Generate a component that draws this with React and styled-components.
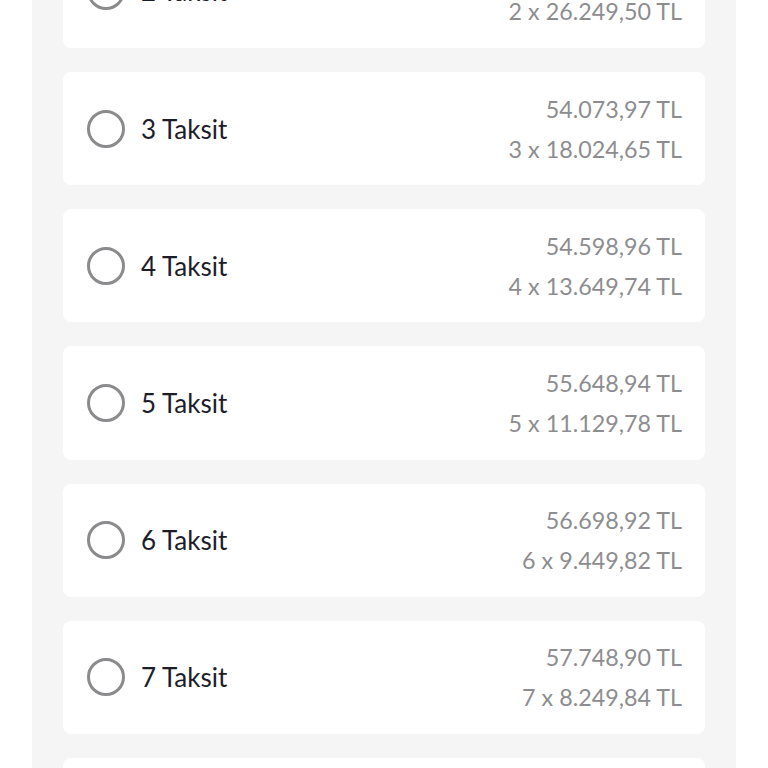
import { createGlobalStyle, styled } from "styled-components";

const plans = [
  { count: 2, total: "52.499,00 TL", each: "26.249,50 TL" },
  { count: 3, total: "54.073,97 TL", each: "18.024,65 TL" },
  { count: 4, total: "54.598,96 TL", each: "13.649,74 TL" },
  { count: 5, total: "55.648,94 TL", each: "11.129,78 TL" },
  { count: 6, total: "56.698,92 TL", each: "9.449,82 TL" },
  { count: 7, total: "57.748,90 TL", each: "8.249,84 TL" },
  { count: 8, total: "58.798,88 TL", each: "7.349,86 TL" },
];

function App() {
  return (
    <>
      <GlobalStyle />
      <Page>
        <Panel>
          <OptionList>
            {plans.map((plan) => (
              <OptionCard key={plan.count}>
                <Label>
                  <Radio />
                  <LabelText>{plan.count} Taksit</LabelText>
                </Label>
                <Prices>
                  <Price>{plan.total}</Price>
                  <Price>
                    {plan.count} x {plan.each}
                  </Price>
                </Prices>
              </OptionCard>
            ))}
          </OptionList>
        </Panel>
      </Page>
    </>
  );
}

export default App;

const GlobalStyle = createGlobalStyle`
  html, body {
    margin: 0;
    padding: 0;
    background: #ffffff;
    overflow: hidden;
  }
  body {
    font-family: Lato, "Liberation Sans", sans-serif;
  }
`;

const Page = styled.div`
  width: 768px;
  height: 768px;
  overflow: hidden;
  background: #ffffff;
`;

const Panel = styled.div`
  margin: 0 32px;
  height: 100%;
  padding: 0 31px;
  background: #f5f5f5;
  overflow: hidden;
`;

const OptionList = styled.div`
  display: flex;
  flex-direction: column;
  gap: 24px;
  margin-top: -65.2px;
`;

const OptionCard = styled.div`
  display: flex;
  justify-content: space-between;
  align-items: center;
  height: 113.2px;
  flex-shrink: 0;
  padding: 0 23px 0 24px;
  background: #ffffff;
  border-radius: 8px;
`;

const Label = styled.div`
  display: flex;
  align-items: center;
  gap: 16px;
`;

const Radio = styled.span`
  display: block;
  width: 38px;
  height: 38px;
  box-sizing: border-box;
  border: 3px solid #8b8b8e;
  border-radius: 50%;
`;

const LabelText = styled.span`
  font-size: 26px;
  color: #1d1d29;
`;

const Prices = styled.div`
  display: flex;
  flex-direction: column;
  align-items: flex-end;
`;

const Price = styled.span`
  font-size: 23.3px;
  line-height: 40px;
  color: #8d8d90;
`;
